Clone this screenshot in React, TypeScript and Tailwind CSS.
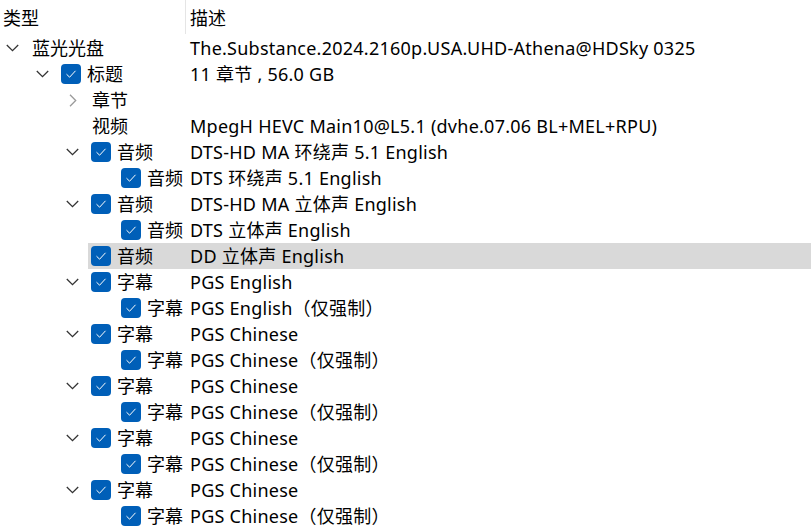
import React from 'react';

interface Row {
  level: number;
  toggle?: 'open' | 'closed';
  checked?: boolean;
  label: string;
  desc?: string;
  selected?: boolean;
}

const rows: Row[] = [
  { level: 1, toggle: 'open', label: '蓝光光盘', desc: 'The.Substance.2024.2160p.USA.UHD-Athena@HDSky 0325' },
  { level: 2, toggle: 'open', checked: true, label: '标题', desc: '11 章节 , 56.0 GB' },
  { level: 3, toggle: 'closed', label: '章节' },
  { level: 3, label: '视频', desc: 'MpegH HEVC Main10@L5.1 (dvhe.07.06 BL+MEL+RPU)' },
  { level: 3, toggle: 'open', checked: true, label: '音频', desc: 'DTS-HD MA 环绕声 5.1 English' },
  { level: 4, checked: true, label: '音频', desc: 'DTS 环绕声 5.1 English' },
  { level: 3, toggle: 'open', checked: true, label: '音频', desc: 'DTS-HD MA 立体声 English' },
  { level: 4, checked: true, label: '音频', desc: 'DTS 立体声 English' },
  { level: 3, checked: true, label: '音频', desc: 'DD 立体声 English', selected: true },
  { level: 3, toggle: 'open', checked: true, label: '字幕', desc: 'PGS English' },
  { level: 4, checked: true, label: '字幕', desc: 'PGS English（仅强制）' },
  { level: 3, toggle: 'open', checked: true, label: '字幕', desc: 'PGS Chinese' },
  { level: 4, checked: true, label: '字幕', desc: 'PGS Chinese（仅强制）' },
  { level: 3, toggle: 'open', checked: true, label: '字幕', desc: 'PGS Chinese' },
  { level: 4, checked: true, label: '字幕', desc: 'PGS Chinese（仅强制）' },
  { level: 3, toggle: 'open', checked: true, label: '字幕', desc: 'PGS Chinese' },
  { level: 4, checked: true, label: '字幕', desc: 'PGS Chinese（仅强制）' },
  { level: 3, toggle: 'open', checked: true, label: '字幕', desc: 'PGS Chinese' },
  { level: 4, checked: true, label: '字幕', desc: 'PGS Chinese（仅强制）' },
];

const COL1 = 186;

// full-width parens kept as atomic boxes so the browser doesn't trim them
function Desc({ text }: { text?: string }) {
  if (!text) return null;
  const parts = text.split(/([（）])/);
  return (
    <>
      {parts.map((p, i) =>
        p === '（' || p === '）' ? (
          <span key={i} className="inline-block">{p}</span>
        ) : (
          <React.Fragment key={i}>{p}</React.Fragment>
        )
      )}
    </>
  );
}

function Chevron({ state }: { state?: 'open' | 'closed' }) {
  if (state === 'open') {
    return (
      <svg width="13" height="8" viewBox="0 0 13 8" className="ml-[6px] shrink-0">
        <path d="M0.8 1 L6.5 6.7 L12.2 1" fill="none" stroke="#333" strokeWidth="1.3" />
      </svg>
    );
  }
  if (state === 'closed') {
    return (
      <svg width="8" height="13" viewBox="0 0 8 13" className="ml-[9px] shrink-0">
        <path d="M1 0.8 L6.7 6.5 L1 12.2" fill="none" stroke="#9a9a9a" strokeWidth="1.3" />
      </svg>
    );
  }
  return null;
}

function CheckBox() {
  return (
    <span className="flex h-[20px] w-[20px] shrink-0 items-center justify-center rounded-[4px] bg-[#005fb8]">
      <svg width="12" height="10" viewBox="0 0 12 10">
        <path d="M1.5 5.2 L4.6 8.2 L10.5 1.8" fill="none" stroke="#fff" strokeWidth="1" />
      </svg>
    </span>
  );
}

function TreeRow({ row }: { row: Row }) {
  const left = 30 * row.level - 2;
  return (
    <div className="flex h-[26px] items-center">
      <div className="flex h-full shrink-0 items-center" style={{ width: left, paddingLeft: left - 28 }}>
        <Chevron state={row.toggle} />
      </div>
      <div className={`flex h-full min-w-0 flex-1 items-center ${row.selected ? 'bg-[#d9d9d9]' : ''}`}>
        <div
          className="flex h-full shrink-0 items-center gap-[6px] overflow-hidden whitespace-nowrap pl-[3px]"
          style={{ width: COL1 - left }}
        >
          {row.checked && <CheckBox />}
          <span className={row.checked ? '' : 'pl-[1px]'}>{row.label}</span>
        </div>
        <div className="whitespace-nowrap pl-[4px] tracking-[0.25px]">
          <Desc text={row.desc} />
        </div>
      </div>
    </div>
  );
}

export default function App() {
  return (
    <div
      className="h-[528px] w-[811px] overflow-hidden bg-white text-[18px] leading-[26px] text-black"
      style={{ fontFamily: '"Noto Sans", "Noto Sans CJK SC", sans-serif' }}
    >
      <div className="flex h-[35px] items-center">
        <div className="flex h-full w-[185px] items-center pl-[3px]">类型</div>
        <div className="h-[34px] w-px self-start bg-[#e5e5e5]" />
        <div className="pl-[4px]">描述</div>
      </div>
      {rows.map((row, i) => (
        <TreeRow key={i} row={row} />
      ))}
    </div>
  );
}
